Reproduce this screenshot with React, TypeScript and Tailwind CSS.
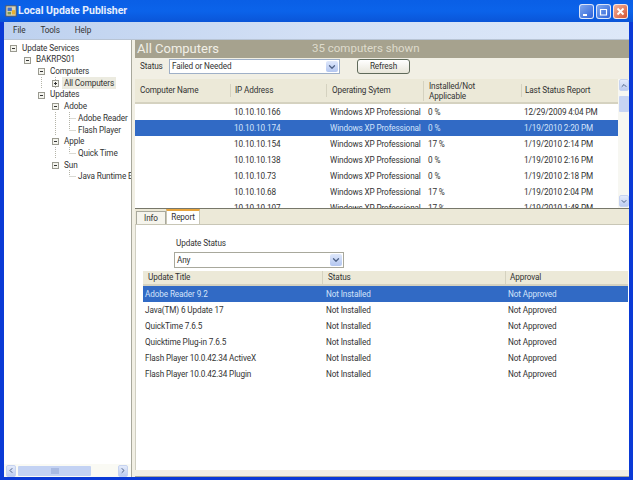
import { ChevronDown, ChevronUp, ChevronLeft, ChevronRight } from "lucide-react"

const TREE = [
  { label: "Update Services", cells: "m" },
  { label: "BAKRPS01", cells: " m" },
  { label: "Computers", cells: "  m" },
  { label: "All Computers", cells: "  |p", active: true },
  { label: "Updates", cells: "  m" },
  { label: "Adobe", cells: "   m" },
  { label: "Adobe Reader", cells: "   |T" },
  { label: "Flash Player", cells: "   |L" },
  { label: "Apple", cells: "   m" },
  { label: "Quick Time", cells: "   |L" },
  { label: "Sun", cells: "   m" },
  { label: "Java Runtime Environment", cells: "    L" },
]

const COMPUTERS = [
  ["10.10.10.166", "Windows XP Professional", "0 %", "12/29/2009 4:04 PM"],
  ["10.10.10.174", "Windows XP Professional", "0 %", "1/19/2010 2:20 PM"],
  ["10.10.10.154", "Windows XP Professional", "17 %", "1/19/2010 2:14 PM"],
  ["10.10.10.138", "Windows XP Professional", "0 %", "1/19/2010 2:16 PM"],
  ["10.10.10.73", "Windows XP Professional", "0 %", "1/19/2010 2:18 PM"],
  ["10.10.10.68", "Windows XP Professional", "17 %", "1/19/2010 2:04 PM"],
  ["10.10.10.107", "Windows XP Professional", "17 %", "1/19/2010 1:48 PM"],
]

const UPDATES = [
  "Adobe Reader 9.2",
  "Java(TM) 6 Update 17",
  "QuickTime 7.6.5",
  "Quicktime Plug-in 7.6.5",
  "Flash Player 10.0.42.34 ActiveX",
  "Flash Player 10.0.42.34 Plugin",
]

function TreeCell({ kind }: { kind: string }) {
  return (
    <svg width="14" height="12" viewBox="0 0 14 12" className="shrink-0">
      <g stroke="#b4b4a8" strokeWidth="1" strokeDasharray="1 1" fill="none">
        {(kind === "|" || kind === "T" || kind === "p") && <path d="M7.5 0V12" />}
        {kind === "L" && <path d="M7.5 0V6" />}
        {(kind === "T" || kind === "L") && <path d="M7.5 6.5H14" />}
      </g>
      {(kind === "m" || kind === "p") && (
        <g>
          <rect x="4.5" y="3.5" width="6" height="6" fill="#f4f4ee" stroke="#9a9a90" />
          <path d="M6 6.5H9" stroke="#333" />
          {kind === "p" && <path d="M7.5 5V8" stroke="#333" />}
        </g>
      )}
    </svg>
  )
}

function ComboArrow() {
  return (
    <div className="w-[12px] self-stretch m-px rounded-[2px] bg-gradient-to-b from-[#dfe8fb] to-[#b3c6f0] flex items-center justify-center">
      <ChevronDown size={10} strokeWidth={3} className="text-[#4d6185]" />
    </div>
  )
}

function ScrollBtn({ children }: { children: React.ReactNode }) {
  return (
    <div className="w-[10px] h-[12px] shrink-0 rounded-[2px] border border-[#c6d3f0] bg-gradient-to-b from-[#e4ebfb] to-[#bccbf0] flex items-center justify-center text-[#4d6185]">
      {children}
    </div>
  )
}

function CaptionBtn({ kind }: { kind: "min" | "max" | "close" }) {
  const bg =
    kind === "close"
      ? "from-[#eeb09a] to-[#d6522f]"
      : "from-[#7ea6ee] to-[#2f62d8]"
  return (
    <div className={`w-[15px] h-[15px] rounded-[3px] border border-white/80 bg-gradient-to-br ${bg} flex items-center justify-center`}>
      <svg width="11" height="11" viewBox="0 0 11 11" fill="none" stroke="white">
        {kind === "min" && <path d="M2 9H6" strokeWidth="2" />}
        {kind === "max" && <path d="M2 3.5H9M2.5 3V9H8.5V3" strokeWidth="1.2" />}
        {kind === "close" && <path d="M2.5 2.5L8.5 8.5M8.5 2.5L2.5 8.5" strokeWidth="1.8" />}
      </svg>
    </div>
  )
}

export default function App() {
  return (
    <div className="w-[633px] h-[480px] overflow-hidden flex flex-col bg-[#0a3ad6] font-['Roboto','Liberation_Sans',sans-serif] text-[8.2px] tracking-[-0.12px] text-[#333]">
      {/* title bar */}
      <div className="h-[22px] shrink-0 flex items-center pl-[5px] pr-[5px] gap-[1px] bg-gradient-to-b from-[#0a5fe6] via-[#0b63ea] to-[#0a55d8]">
        <svg width="12" height="12" viewBox="0 0 14 14" className="shrink-0">
          <rect x="1" y="1" width="12" height="12" fill="#d8d4b8" stroke="#555" />
          <rect x="3" y="3" width="5" height="4" fill="#3c6fd0" />
          <rect x="8" y="6" width="4" height="5" fill="#e8b030" />
          <rect x="3" y="8" width="4" height="3" fill="#7a9a50" />
        </svg>
        <span className="flex-1 text-[10.5px] font-bold text-[#e6eefc] tracking-normal">Local Update Publisher</span>
        <div className="flex gap-[2px]">
          <CaptionBtn kind="min" />
          <CaptionBtn kind="max" />
          <CaptionBtn kind="close" />
        </div>
      </div>

      <div className="flex-1 min-h-0 flex flex-col pl-[4px] pr-[4px] pb-[3px]">
        {/* menu */}
        <div className="h-[18px] shrink-0 flex items-center pl-[9px] gap-[15px] bg-gradient-to-r from-[#bdd1ef] via-[#d3e0f5] to-[#dde8f8] border-b border-[#b8c4d4]">
          <span>File</span>
          <span>Tools</span>
          <span>Help</span>
        </div>

        <div className="flex-1 min-h-0 flex bg-[#f1efe4]">
          {/* tree */}
          <div className="w-[128px] shrink-0 flex flex-col bg-white border-r border-[#a8a89c]">
            <div className="flex-1 min-h-0 overflow-hidden pt-[2px] pl-[2px]">
              {TREE.map((node) => (
                <div key={node.label} className="h-[11.7px] flex items-center whitespace-nowrap">
                  {node.cells.split("").map((c, i) => (
                    <TreeCell key={i} kind={c} />
                  ))}
                  <span className={node.active ? "bg-[#ecebe0] px-[2px]" : "px-[2px]"}>{node.label}</span>
                </div>
              ))}
            </div>
            <div className="h-[13px] shrink-0 flex items-center bg-[#fafaf4] pl-[2px] pr-[3px]">
              <ScrollBtn><ChevronLeft size={9} strokeWidth={3} /></ScrollBtn>
              <div className="w-[73px] h-[10px] ml-[2px] rounded-[1px] bg-[#c3d2f3] flex items-center justify-center text-[#8fa3d0]">
                <svg width="8" height="6" viewBox="0 0 8 6" stroke="currentColor"><path d="M1 0V6M3 0V6M5 0V6M7 0V6" /></svg>
              </div>
              <div className="flex-1" />
              <ScrollBtn><ChevronRight size={9} strokeWidth={3} /></ScrollBtn>
            </div>
          </div>

          {/* right side */}
          <div className="flex-1 min-w-0 flex flex-col ml-[3px]">
            <div className="h-[18px] shrink-0 flex items-center bg-[#a6a28e] text-[#f1efe6] text-[13px] tracking-normal pl-[2px]">
              <span className="w-[175px]">All Computers</span>
              <span className="text-[11.5px] text-[#dedbcc]">35 computers shown</span>
            </div>
            <div className="h-[21px] shrink-0 flex items-start pt-[1px] pl-[5px]">
              <span className="w-[29px] h-[15px] flex items-center">Status</span>
              <div className="w-[171px] h-[15px] flex items-center bg-white border border-[#9fb0c8] pl-[2px]">
                <span className="flex-1">Failed or Needed</span>
                <ComboArrow />
              </div>
              <div className="w-[53px] h-[15px] ml-[17px] flex items-center justify-center rounded-[3px] border border-[#5f6a5a] bg-gradient-to-b from-white to-[#e8e6da]">
                Refresh
              </div>
            </div>

            {/* computers grid */}
            <div className="h-[129px] shrink-0 flex overflow-hidden">
              <div className="w-[483px] shrink-0 flex flex-col">
                <div className="h-[25px] shrink-0 grid grid-cols-[95px_96px_97px_98px_97px] bg-[#ece9d8] border-b-2 border-[#d5d2c0]">
                  <span className="self-center pl-[5px]">Computer Name</span>
                  <span className="self-center pl-[4px] border-l border-[#d5d2c0]">IP Address</span>
                  <span className="self-center pl-[5px] border-l border-[#d5d2c0]">Operating Sytem</span>
                  <span className="self-center pl-[5px] leading-[10px] border-l border-[#d5d2c0]">Installed/Not<br />Applicable</span>
                  <span className="self-center pl-[3px] border-l border-[#d5d2c0]">Last Status Report</span>
                </div>
                <div className="bg-white flex-1">
                  {COMPUTERS.map((row, i) => (
                    <div
                      key={row[0]}
                      className={`h-[16px] grid grid-cols-[95px_96px_97px_98px_97px] items-center whitespace-nowrap ${i === 1 ? "bg-[#316ac5] text-[#d4e4fa]" : ""}`}
                    >
                      <span />
                      <span className="pl-[4px]">{row[0]}</span>
                      <span className="pl-[4px]">{row[1]}</span>
                      <span className="pl-[5px]">{row[2]}</span>
                      <span className="pl-[3px]">{row[3]}</span>
                    </div>
                  ))}
                </div>
              </div>
              <div className="w-[11px] shrink-0 flex flex-col bg-[#f7f7f2] pl-px">
                <ScrollBtn><ChevronUp size={9} strokeWidth={3} /></ScrollBtn>
                <div className="h-[16px] mt-[5px] rounded-[1px] bg-[#c7d4f3]" />
                <div className="flex-1" />
                <div className="mb-[1px]"><ScrollBtn><ChevronDown size={9} strokeWidth={3} /></ScrollBtn></div>
              </div>
            </div>

            {/* tabs */}
            <div className="h-[17px] shrink-0 flex items-end pl-[1px] bg-[#ece9d8] border-t border-[#77776a] border-b border-b-[#c8c6b6]">
              <div className="h-[13px] w-[30px] flex items-center justify-center bg-[#f5f4ec] border border-b-0 border-[#a8a89c]">Info</div>
              <div className="h-[15px] w-[34px] flex items-center justify-center bg-white border-x border-[#c8c6b6] border-t-2 border-t-[#e8a43c]">Report</div>
            </div>

            {/* report page */}
            <div className="flex-1 min-h-0 bg-white flex flex-col pl-[7px] pr-[1px] border-l border-[#d0cfc2]">
              <div className="pt-[12px] pl-[33px] h-[27px]">Update Status</div>
              <div className="ml-[31px] w-[170px] h-[16px] shrink-0 flex items-center bg-white border border-[#a8a89c] pl-[2px]">
                <span className="flex-1">Any</span>
                <ComboArrow />
              </div>
              <div className="mt-[3px] h-[15px] shrink-0 grid grid-cols-[179px_183px_1fr] items-center bg-[#ece9d8] border-b-2 border-[#d5d2c0]">
                <span className="pl-[5px]">Update Title</span>
                <span className="pl-[5px] border-l border-[#d5d2c0]">Status</span>
                <span className="pl-[4px] border-l border-[#d5d2c0]">Approval</span>
              </div>
              {UPDATES.map((title, i) => (
                <div
                  key={title}
                  className={`h-[16px] shrink-0 grid grid-cols-[179px_183px_1fr] items-center ${i === 0 ? "bg-[#316ac5] text-[#d4e4fa]" : ""}`}
                >
                  <span className="pl-[2px]">{title}</span>
                  <span className="pl-[4px]">Not Installed</span>
                  <span className="pl-[3px]">Not Approved</span>
                </div>
              ))}
            </div>
            <div className="h-[7px] shrink-0 bg-[#f1efe4] border-b border-[#a8a89c]" />
          </div>
        </div>
      </div>
    </div>
  )
}
